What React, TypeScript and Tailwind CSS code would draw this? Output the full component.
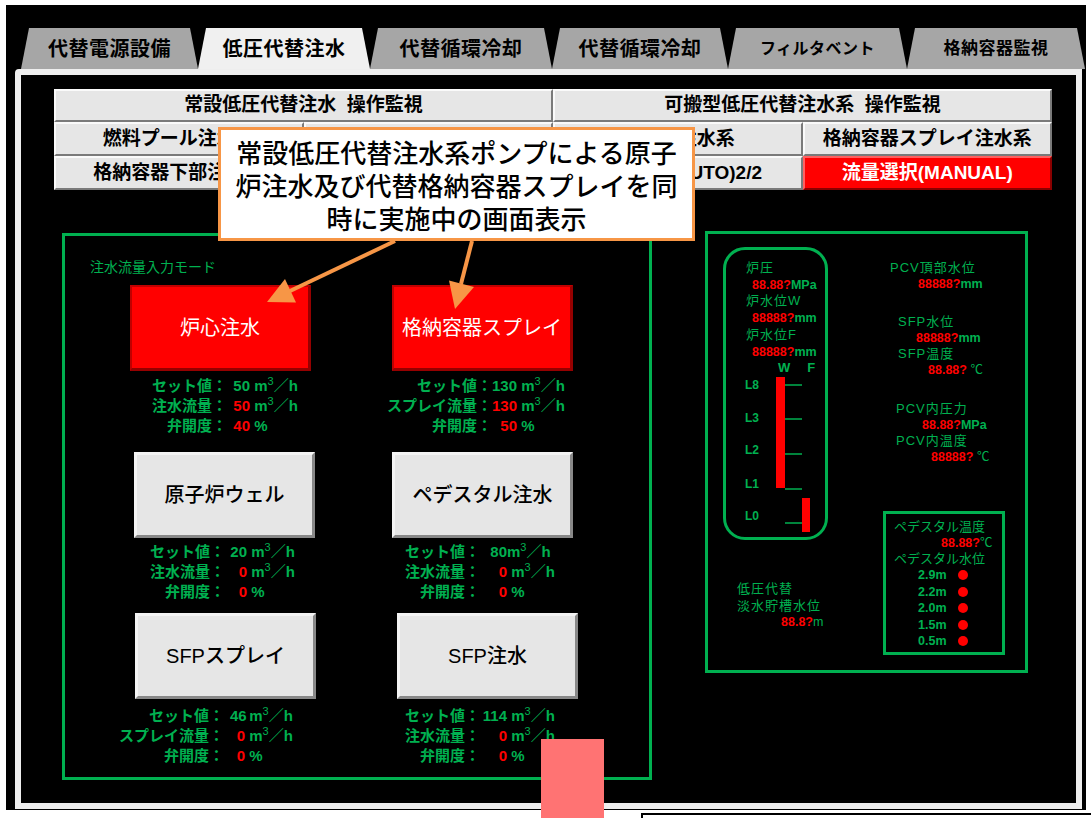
import React from "react";

type Tab = { label: string; w: string; size: string; active?: boolean };

const tabs: Tab[] = [
  { label: "代替電源設備", w: "w-[177px]", size: "text-[20px]" },
  { label: "低圧代替注水", w: "w-[172px]", size: "text-[20px]", active: true },
  { label: "代替循環冷却", w: "w-[182px]", size: "text-[20px]" },
  { label: "代替循環冷却", w: "w-[176px]", size: "text-[20px]" },
  { label: "フィルタベント", w: "w-[179px]", size: "text-[16px]" },
  { label: "格納容器監視", w: "w-[178px]", size: "text-[17px]" },
];

type Unit = "m3" | "m3tight" | "pct";
type Line = { label: string; num: string; unit: Unit; red?: boolean };

function UnitText({ unit }: { unit: Unit }) {
  if (unit === "pct") return <span className="whitespace-pre">{"\u00a0%"}</span>;
  return (
    <span className="whitespace-pre">
      {unit === "m3" ? "\u00a0m" : "m"}
      <span className="relative -top-[6px] text-[11px] font-normal">3</span>
      ／h
    </span>
  );
}

function TopBtn({ children, red, className = "" }: { children?: React.ReactNode; red?: boolean; className?: string }) {
  return (
    <div
      className={`flex items-center justify-center whitespace-pre border-2 text-[19px] font-bold ${
        red
          ? "border-t-[#ff6060] border-l-[#ff6060] border-r-[#8a0000] border-b-[#8a0000] bg-[#ff0000] text-white"
          : "border-t-[#fafafa] border-l-[#fafafa] border-r-[#7a7a7a] border-b-[#7a7a7a] bg-[#e6e6e6] text-black"
      } ${className}`}
    >
      {children}
    </div>
  );
}

function BigBtn({ label, red, className = "" }: { label: string; red?: boolean; className?: string }) {
  return (
    <div
      className={`flex h-[86px] w-[181px] shrink-0 items-center justify-center text-[20px] ${
        red
          ? "border-2 border-[#c00000] border-b-[3px] border-r-[3px] border-b-[#960000] border-r-[#960000] bg-[#ff0000] text-white"
          : "border-[3px] border-t-[#f4f4f4] border-l-[#f4f4f4] border-r-[#888888] border-b-[#888888] bg-[#e6e6e6] font-medium text-black"
      } ${className}`}
    >
      {label}
    </div>
  );
}

function Info({ lines, labelW, numCls, className = "" }: { lines: Line[]; labelW: string; numCls: string; className?: string }) {
  return (
    <div className={`flex flex-col text-[15px] font-bold leading-[20px] text-[#00b050] ${className}`}>
      {lines.map((l) => (
        <div key={l.label} className="flex h-[20px] whitespace-nowrap">
          <div className={`flex shrink-0 justify-end ${labelW}`}>
            <span>{l.label}</span>
          </div>
          <span className={`shrink-0 text-right ${numCls} ${l.red ? "text-[#ff0000]" : ""}`}>{l.num}</span>
          <UnitText unit={l.unit} />
        </div>
      ))}
    </div>
  );
}

function Val({ v, u, thin, className = "" }: { v: string; u: string; thin?: boolean; className?: string }) {
  return (
    <div className={`whitespace-pre text-[12.5px] font-bold ${className}`}>
      <span className="text-[#ff0000]">{v}</span>
      <span className={`text-[#00b050] ${thin ? "font-normal" : ""}`}>{u}</span>
    </div>
  );
}

function Lbl({ children, className = "" }: { children: React.ReactNode; className?: string }) {
  return <div className={`whitespace-nowrap text-[13px] tracking-[1px] text-[#00b050] ${className}`}>{children}</div>;
}

function Gauge() {
  return (
    <div className="h-[293px] w-[105px] rounded-[22px] border-[3px] border-[#00b050] pt-[10px]">
      <div className="flex flex-col leading-[16.7px]">
        <Lbl className="pl-[20px]">炉圧</Lbl>
        <Val className="pl-[26px]" v="88.88?" u="MPa" />
        <Lbl className="pl-[20px]">炉水位W</Lbl>
        <Val className="pl-[26px]" v="88888?" u="mm" />
        <Lbl className="pl-[20px]">炉水位F</Lbl>
        <Val className="pl-[26px]" v="88888?" u="mm" />
        <div className="flex pl-[52px] text-[13px] font-bold text-[#00b050]">
          <span>W</span>
          <span className="ml-[17px]">F</span>
        </div>
      </div>
      <div className="flex">
        <div className="ml-[19px] flex w-[25px] flex-col text-[12px] font-bold leading-[16px] text-[#00b050]">
          <div>L8</div>
          <div className="mt-[17px]">L3</div>
          <div className="mt-[16px]">L2</div>
          <div className="mt-[18px]">L1</div>
          <div className="mt-[16px]">L0</div>
        </div>
        <svg width="45" height="160" className="block">
          <rect x="6" y="0" width="9" height="111" fill="#ff0000" />
          {[8, 42, 77, 112, 146].map((y) => (
            <line key={y} x1="15" x2="32" y1={y} y2={y} stroke="#00b050" strokeWidth="1.5" />
          ))}
          <rect x="32" y="121" width="8" height="34" fill="#ff0000" />
        </svg>
      </div>
    </div>
  );
}

function Pedestal() {
  const levels = ["2.9m", "2.2m", "2.0m", "1.5m", "0.5m"];
  return (
    <div className="mt-[46px] h-[144px] w-[122px] border-[3px] border-[#00b050] pt-[5px] leading-[16px]">
      <Lbl className="pl-[8px] tracking-normal">ペデスタル温度</Lbl>
      <Val className="pl-[55px]" v="88.88?" u="℃" thin />
      <Lbl className="pl-[8px] tracking-normal">ペデスタル水位</Lbl>
      {levels.map((l) => (
        <div key={l} className="flex h-[16.5px] items-center pl-[32px]">
          <span className="w-[30px] text-[12.5px] font-bold text-[#00b050]">{l}</span>
          <span className="ml-[10px] h-[10px] w-[10px] rounded-full bg-[#ff0000]" />
        </div>
      ))}
    </div>
  );
}

function LeftPanel() {
  return (
    <div className="ml-[41px] mt-[2px] h-[547px] w-[590px] shrink-0 border-[3px] border-[#00b050] pt-[22px]">
      <div className="pl-[25px] text-[14px] leading-[18px] text-[#00b050]">注水流量入力モード</div>
      <div className="mt-[9px] flex flex-col pl-[65px]">
        <div className="flex">
          <div className="w-[262px]">
            <BigBtn label="炉心注水" red />
            <Info
              className="mt-[5px]"
              labelW="w-[97px]"
              numCls="ml-[6px] w-[17px]"
              lines={[
                { label: "セット値：", num: "50", unit: "m3" },
                { label: "注水流量：", num: "50", unit: "m3", red: true },
                { label: "弁開度：", num: "40", unit: "pct", red: true },
              ]}
            />
          </div>
          <div>
            <BigBtn label="格納容器スプレイ" red />
            <Info
              className="mt-[5px]"
              labelW="w-[100px]"
              numCls="w-[25px]"
              lines={[
                { label: "セット値：", num: "130", unit: "m3" },
                { label: "スプレイ流量：", num: "130", unit: "m3", red: true },
                { label: "弁開度：", num: "50", unit: "pct", red: true },
              ]}
            />
          </div>
        </div>
        <div className="mt-[16px] flex">
          <div className="w-[262px]">
            <BigBtn label="原子炉ウェル" className="ml-[4px]" />
            <Info
              className="mt-[4px]"
              labelW="w-[95px]"
              numCls="ml-[5px] w-[17px]"
              lines={[
                { label: "セット値：", num: "20", unit: "m3" },
                { label: "注水流量：", num: "0", unit: "m3", red: true },
                { label: "弁開度：", num: "0", unit: "pct", red: true },
              ]}
            />
          </div>
          <div>
            <BigBtn label="ペデスタル注水" />
            <Info
              className="mt-[4px]"
              labelW="w-[88px]"
              numCls="ml-[10px] w-[17px]"
              lines={[
                { label: "セット値：", num: "80", unit: "m3tight" },
                { label: "注水流量：", num: "0", unit: "m3", red: true },
                { label: "弁開度：", num: "0", unit: "pct", red: true },
              ]}
            />
          </div>
        </div>
        <div className="mt-[11px] flex">
          <div className="w-[262px]">
            <BigBtn label="SFPスプレイ" className="ml-[5px]" />
            <Info
              className="mt-[7px]"
              labelW="w-[94px]"
              numCls="ml-[6px] w-[15px]"
              lines={[
                { label: "セット値：", num: "46", unit: "m3" },
                { label: "スプレイ流量：", num: "0", unit: "m3", red: true },
                { label: "弁開度：", num: "0", unit: "pct", red: true },
              ]}
            />
          </div>
          <div>
            <BigBtn label="SFP注水" className="ml-[5px]" />
            <Info
              className="mt-[7px]"
              labelW="w-[88px]"
              numCls="w-[27px]"
              lines={[
                { label: "セット値：", num: "114", unit: "m3" },
                { label: "注水流量：", num: "0", unit: "m3", red: true },
                { label: "弁開度：", num: "0", unit: "pct", red: true },
              ]}
            />
          </div>
        </div>
      </div>
    </div>
  );
}

function RightPanel() {
  return (
    <div className="ml-[53px] flex h-[442px] w-[323px] shrink-0 items-start border-[3px] border-[#00b050]">
      <div className="ml-[15px] mt-[13px] flex flex-col">
        <Gauge />
        <div className="ml-[14px] mt-[40px] flex flex-col leading-[17px]">
          <Lbl>低圧代替</Lbl>
          <Lbl>淡水貯槽水位</Lbl>
          <Val className="pl-[44px]" v="88.8?" u="m" thin />
        </div>
      </div>
      <div className="ml-[55px] mt-[26px] flex flex-col leading-[16px]">
        <Lbl className="pl-[7px]">PCV頂部水位</Lbl>
        <Val className="pl-[35px]" v="88888?" u="mm" />
        <Lbl className="mt-[22px] pl-[15px]">SFP水位</Lbl>
        <Val className="pl-[33px]" v="88888?" u="mm" />
        <Lbl className="pl-[15px]">SFP温度</Lbl>
        <Val className="pl-[45px]" v="88.88?" u=" ℃" thin />
        <Lbl className="mt-[23px] pl-[13px]">PCV内圧力</Lbl>
        <Val className="pl-[39px]" v="88.88?" u="MPa" />
        <Lbl className="pl-[13px]">PCV内温度</Lbl>
        <Val className="pl-[48px]" v="88888?" u=" ℃" thin />
        <Pedestal />
      </div>
    </div>
  );
}

export default function App() {
  return (
    <div className="relative h-[818px] w-[1091px] overflow-hidden bg-white pl-[6px] pt-[5px] font-['Liberation_Sans','Noto_Sans_CJK_JP',sans-serif]">
      <div className="h-[805px] w-[1080px] bg-black pt-[23px]">
        {/* tabs */}
        <div className="flex pl-[15px]">
          {tabs.map((t, i) => (
            <div
              key={i}
              className={`flex h-[41px] items-center justify-center font-bold tracking-[0.5px] text-black [clip-path:polygon(8px_0,calc(100%_-_8px)_0,100%_100%,0_100%)] ${t.w} ${t.size} ${
                t.active ? "bg-[#f0f0f0]" : "bg-[#a6a6a6]"
              }`}
            >
              {t.label}
            </div>
          ))}
        </div>

        {/* panel */}
        <div className="ml-[9px] h-[740px] w-[1067px] rounded-tl-[4px] border-[6px] border-[#eeeeee] bg-black">
          <div className="ml-[33px] mt-[14px] grid w-[998px] grid-cols-4 grid-rows-[33px_34px_34px]">
            <TopBtn className="col-span-2">{"常設低圧代替注水  操作監視"}</TopBtn>
            <TopBtn className="col-span-2">{"可搬型低圧代替注水系  操作監視"}</TopBtn>
            <TopBtn>燃料プール注水系</TopBtn>
            <TopBtn />
            <TopBtn>原子炉注水系</TopBtn>
            <TopBtn>格納容器スプレイ注水系</TopBtn>
            <TopBtn>格納容器下部注水系</TopBtn>
            <TopBtn />
            <TopBtn>流量選択(AUTO)2/2</TopBtn>
            <TopBtn red>流量選択(MANUAL)</TopBtn>
          </div>

          <div className="mt-[41px] flex items-start">
            <LeftPanel />
            <RightPanel />
          </div>
        </div>
      </div>

      {/* callout arrows */}
      <svg className="pointer-events-none absolute left-0 top-0" width="1091" height="818">
        <line x1="395" y1="241" x2="290" y2="291" stroke="#f79646" strokeWidth="4" />
        <polygon points="267,302 296,302.5 285,279" fill="#f79646" />
        <line x1="472" y1="241" x2="461" y2="284" stroke="#f79646" strokeWidth="4" />
        <polygon points="455,309 474,287 449,280.5" fill="#f79646" />
      </svg>

      {/* callout */}
      <div className="absolute left-[218px] top-[127px] h-[114px] w-[477px] border-[3px] border-[#f79646] bg-white pt-[8px] text-center text-[26px] font-medium leading-[33px] text-black">
        <div>常設低圧代替注水系ポンプによる原子</div>
        <div>炉注水及び代替格納容器スプレイを同</div>
        <div>時に実施中の画面表示</div>
      </div>

      {/* overlapping marker */}
      <div className="absolute left-[541px] top-[739px] h-[79px] w-[63px] bg-[#ff7373]" />
      <div className="absolute left-[641px] top-[813px] h-[10px] w-[460px] border-l-2 border-t-2 border-black bg-white" />
    </div>
  );
}
